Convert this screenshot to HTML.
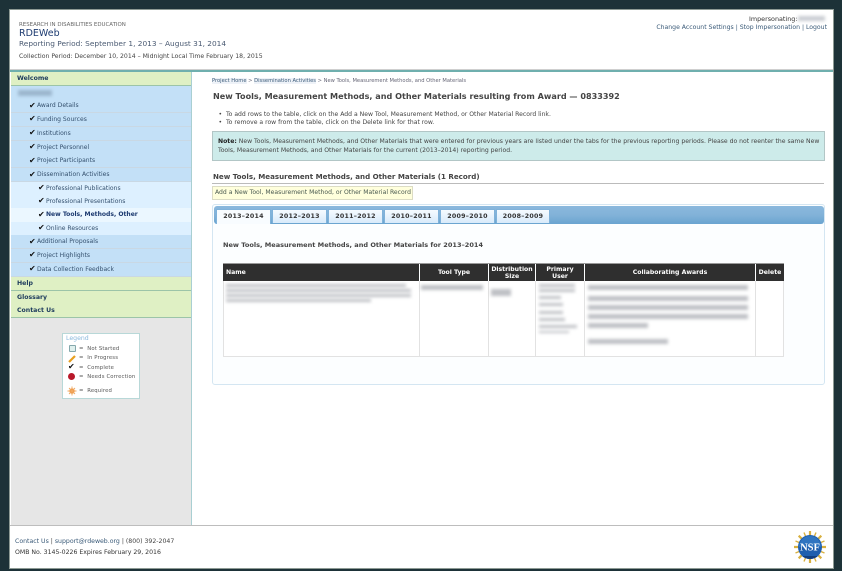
<!DOCTYPE html>
<html><head><meta charset="utf-8"><style>
html,body{margin:0;padding:0}
body{width:842px;height:571px;overflow:hidden;background:#1d3238;position:relative;font-family:"DejaVu Sans",sans-serif;font-size:6.15px;color:#333;filter:blur(.3px)}
.a{position:absolute;white-space:nowrap}
.t{position:absolute;white-space:nowrap;line-height:10px}
.m{position:absolute;left:11px;width:180px;box-sizing:border-box;border-bottom:1px solid #b8d4e0}
.g{background:#dff0c4;border-bottom:1px solid #9cc4a8;font-weight:bold;color:#1c3a5c;height:14px;line-height:13px;padding-left:6px;font-size:6.2px}
.b{background:#c3e0f7;height:14px;line-height:14px;color:#34506e;border-bottom:1px solid #c9d8e4;font-size:6.05px}
.s{background:#ddf0ff;height:13.4px;line-height:14px;color:#34506e;border-bottom:0;font-size:6.05px}
.c{position:absolute;color:#111;font-size:8px;line-height:10px}
.tab{position:absolute;top:209px;height:14px;background:linear-gradient(#f6fbff,#d8eafa);border:1px solid #7fb2da;border-bottom:0;box-sizing:border-box;text-align:center;font-weight:bold;font-size:6.3px;line-height:14px;color:#333;letter-spacing:.25px}
.th{position:absolute;top:264px;height:17px;background:#2f2f2f;color:#fff;font-weight:bold;text-align:center;font-size:6.15px;line-height:7px;display:flex;align-items:center;justify-content:center}
.bl{position:absolute;background:#a9acb2;filter:blur(1.5px);opacity:.75}
.v{position:absolute;top:281px;height:76px;width:1px;background:#e2e2e2}
.lg{font-size:5.3px;color:#555;letter-spacing:.15px}
</style></head><body>
<div class="a" style="left:9px;top:9px;width:825px;height:560px;background:#fff;border:1px solid #8d9a94;box-sizing:border-box"></div>
<div class="a" style="left:10px;top:69px;width:823px;height:1px;background:#cfcfcf"></div>
<div class="a" style="left:10px;top:70px;width:823px;height:2px;background:#6fafae"></div>
<div class="a" style="left:11px;top:72px;width:181px;height:453px;background:#e6e6e6;border-right:1px solid #a9cfd2;box-sizing:border-box"></div>
<div class="a" style="left:10px;top:525px;width:823px;height:1px;background:#bdbdbd"></div>

<div class="t" style="left:19px;top:20px;font-size:5.45px;color:#666">RESEARCH IN DISABILITIES EDUCATION</div>
<div class="t" style="left:19px;top:28px;font-size:9.5px;color:#1c3a70;line-height:12px">RDEWeb</div>
<div class="t" style="left:19px;top:38px;font-size:7.4px;color:#4a5a72;line-height:11px">Reporting Period: September 1, 2013 – August 31, 2014</div>
<div class="t" style="left:19px;top:51.5px;font-size:6.15px;color:#444">Collection Period: December 10, 2014 – Midnight Local Time February 18, 2015</div>
<div class="t" style="left:749px;top:14px;font-size:6.4px;color:#333">Impersonating:</div>
<div class="bl" style="left:798px;top:16px;width:27px;height:5px;background:#b8bcc4"></div>
<div class="t" style="right:15px;top:22.5px;font-size:6.15px;color:#3a5a78">Change Account Settings | Stop Impersonation | Logout</div>

<div class="m g" style="top:72px">Welcome</div>
<div class="m b" style="top:86px;height:13.6px"></div>
<div class="bl" style="left:18px;top:90px;width:34px;height:6px;background:#8fa8c0"></div>
<div class="m b" style="top:99px;padding-left:26px">Award Details</div><div class="c" style="left:29px;top:101px">✔</div>
<div class="m b" style="top:113px;padding-left:26px">Funding Sources</div><div class="c" style="left:29px;top:114px">✔</div>
<div class="m b" style="top:126.5px;padding-left:26px">Institutions</div><div class="c" style="left:29px;top:128px">✔</div>
<div class="m b" style="top:140.5px;padding-left:26px">Project Personnel</div><div class="c" style="left:29px;top:142px">✔</div>
<div class="m b" style="top:154px;padding-left:26px">Project Participants</div><div class="c" style="left:29px;top:156px">✔</div>
<div class="m b" style="top:168px;padding-left:26px">Dissemination Activities</div><div class="c" style="left:29px;top:170px">✔</div>
<div class="m s" style="top:181.5px;padding-left:35px">Professional Publications</div><div class="c" style="left:38px;top:183px">✔</div>
<div class="m s" style="top:194.9px;padding-left:35px">Professional Presentations</div><div class="c" style="left:38px;top:196px">✔</div>
<div class="m s" style="top:208.3px;padding-left:35px;background:#ebf7ff;font-weight:bold;color:#1c3a70">New Tools, Methods, Other</div><div class="c" style="left:38px;top:210px">✔</div>
<div class="m s" style="top:221.7px;padding-left:35px">Online Resources</div><div class="c" style="left:38px;top:223px">✔</div>
<div class="m b" style="top:235px;padding-left:26px">Additional Proposals</div><div class="c" style="left:29px;top:237px">✔</div>
<div class="m b" style="top:249px;padding-left:26px">Project Highlights</div><div class="c" style="left:29px;top:250px">✔</div>
<div class="m b" style="top:262.5px;padding-left:26px">Data Collection Feedback</div><div class="c" style="left:29px;top:264px">✔</div>
<div class="m g" style="top:276.5px">Help</div>
<div class="m g" style="top:290.5px">Glossary</div>
<div class="m g" style="top:304px">Contact Us</div>

<div class="a" style="left:62px;top:333px;width:78px;height:66px;background:#fff;border:1px solid #b8d8d8;box-sizing:border-box"></div>
<div class="t" style="left:66px;top:334px;color:#8ab8dc;font-size:6.2px">Legend</div>
<div class="a" style="left:69px;top:345px;width:5px;height:5px;background:#dff0ee;border:1px solid #84a8ac;border-radius:1px"></div>
<svg class="a" style="left:68px;top:354px" width="9" height="9" viewBox="0 0 9 9"><path d="M1 8 L7 2" stroke="#e8a020" stroke-width="2.2"/></svg>
<div class="c" style="left:68px;top:362px">✔</div>
<div class="a" style="left:68px;top:373px;width:7px;height:7px;border-radius:50%;background:#b8182a"></div>
<svg class="a" style="left:67px;top:386px" width="10" height="10" viewBox="0 0 10 10"><circle cx="5" cy="5" r="2.6" fill="#ee8a30"/><path d="M5 .5V9.5M.5 5H9.5M2 2L8 8M8 2L2 8" stroke="#f0a860" stroke-width=".9"/></svg>
<div class="t lg" style="left:79px;top:344px">=&nbsp; Not Started</div>
<div class="t lg" style="left:79px;top:353px">=&nbsp; In Progress</div>
<div class="t lg" style="left:79px;top:363px">=&nbsp; Complete</div>
<div class="t lg" style="left:79px;top:372px">=&nbsp; Needs Correction</div>
<div class="t lg" style="left:79px;top:386px">=&nbsp; Required</div>

<div class="t" style="left:212px;top:76px;font-size:5.17px;color:#667"><span style="color:#3a5a78;background:#eef2f8">Project Home</span> &gt; <span style="color:#3a5a78;background:#eef2f8">Dissemination Activities</span> &gt; New Tools, Measurement Methods, and Other Materials</div>
<div class="t" style="left:213px;top:91px;font-size:8.1px;font-weight:bold;color:#444;line-height:11px">New Tools, Measurement Methods, and Other Materials resulting from Award — 0833392</div>
<div class="t" style="left:218.5px;top:111px;font-size:6.1px;line-height:8px;color:#444">•&nbsp; To add rows to the table, click on the Add a New Tool, Measurement Method, or Other Material Record link.<br>•&nbsp; To remove a row from the table, click on the Delete link for that row.</div>
<div class="a" style="left:212px;top:131px;width:613px;height:30px;background:#cdebea;border:1px solid #b2c6c6;box-sizing:border-box"></div>
<div class="t" style="left:218px;top:136.5px;line-height:9.4px;color:#444;font-size:6.12px"><b style="color:#222">Note:</b> New Tools, Measurement Methods, and Other Materials that were entered for previous years are listed under the tabs for the previous reporting periods. Please do not reenter the same New<br>Tools, Measurement Methods, and Other Materials for the current (2013–2014) reporting period.</div>
<div class="t" style="left:213px;top:172px;font-size:7.1px;font-weight:bold;color:#444">New Tools, Measurement Methods, and Other Materials (1 Record)</div>
<div class="a" style="left:212px;top:183px;width:612px;height:1px;background:#bbb"></div>
<div class="a" style="left:212px;top:186px;width:201px;height:14px;background:#ffffdc;border:1px solid #dcdcc4;box-sizing:border-box"></div>
<div class="t" style="left:215px;top:188px;font-size:6.1px;color:#4a5a50">Add a New Tool, Measurement Method, or Other Material Record</div>

<div class="a" style="left:212px;top:204px;width:613px;height:181px;background:#fcfeff;border:1px solid #d4e6f2;border-radius:3px;box-sizing:border-box"></div>
<div class="a" style="left:214px;top:206px;width:610px;height:18px;background:linear-gradient(#8ab8dd,#82b2d8 50%,#6aa4d0);border-radius:3px"></div>
<div class="tab" style="left:216px;width:55px;height:15px;background:#f8fcff">2013–2014</div>
<div class="tab" style="left:272px;width:55px">2012–2013</div>
<div class="tab" style="left:328px;width:55px">2011–2012</div>
<div class="tab" style="left:384px;width:55px">2010–2011</div>
<div class="tab" style="left:440px;width:55px">2009–2010</div>
<div class="tab" style="left:496px;width:54px">2008–2009</div>
<div class="t" style="left:223px;top:240px;font-size:6.55px;font-weight:bold;color:#444">New Tools, Measurement Methods, and Other Materials for 2013–2014</div>

<div class="a" style="left:223px;top:263px;width:561px;height:1px;background:#999"></div>
<div class="a" style="left:223px;top:281px;width:561px;height:76px;background:#fff;box-sizing:border-box;border-bottom:1px solid #e2e2e2"></div>
<div class="th" style="left:223px;width:196px;justify-content:flex-start;padding-left:3px;box-sizing:border-box">Name</div>
<div class="th" style="left:420px;width:68px">Tool Type</div>
<div class="th" style="left:489px;width:46px">Distribution<br>Size</div>
<div class="th" style="left:536px;width:48px">Primary<br>User</div>
<div class="th" style="left:585px;width:170px">Collaborating Awards</div>
<div class="th" style="left:756px;width:28px">Delete</div>
<div class="v" style="left:223px"></div><div class="v" style="left:419px"></div><div class="v" style="left:488px"></div><div class="v" style="left:535px"></div><div class="v" style="left:584px"></div><div class="v" style="left:755px"></div><div class="v" style="left:783px"></div>

<div class="bl" style="left:226px;top:284px;width:180px;height:3px"></div>
<div class="bl" style="left:226px;top:289px;width:185px;height:3px"></div>
<div class="bl" style="left:226px;top:294px;width:185px;height:3px"></div>
<div class="bl" style="left:226px;top:299px;width:145px;height:3px"></div>
<div class="bl" style="left:421px;top:285px;width:62px;height:5px"></div>
<div class="bl" style="left:491px;top:289px;width:20px;height:7px"></div>
<div class="bl" style="left:539px;top:284px;width:36px;height:3px"></div>
<div class="bl" style="left:539px;top:289px;width:36px;height:3px"></div>
<div class="bl" style="left:539px;top:296px;width:22px;height:3px"></div>
<div class="bl" style="left:539px;top:303px;width:24px;height:3px"></div>
<div class="bl" style="left:539px;top:311px;width:24px;height:3px"></div>
<div class="bl" style="left:539px;top:318px;width:26px;height:3px"></div>
<div class="bl" style="left:539px;top:325px;width:38px;height:3px"></div>
<div class="bl" style="left:539px;top:331px;width:30px;height:2px"></div>
<div class="bl" style="left:588px;top:285px;width:160px;height:5px"></div>
<div class="bl" style="left:588px;top:296px;width:160px;height:5px"></div>
<div class="bl" style="left:588px;top:305px;width:160px;height:5px"></div>
<div class="bl" style="left:588px;top:314px;width:160px;height:5px"></div>
<div class="bl" style="left:588px;top:323px;width:60px;height:5px"></div>
<div class="bl" style="left:588px;top:339px;width:80px;height:5px"></div>

<div class="t" style="left:15px;top:537px;font-size:6.2px;color:#444"><span style="color:#3a5a78">Contact Us</span> | <span style="color:#3a5a78">support@rdeweb.org</span> | (800) 392-2047</div>
<div class="t" style="left:15px;top:548px;font-size:6.2px;color:#333">OMB No. 3145-0226 Expires February 29, 2016</div>

<svg class="a" style="left:793px;top:530px" width="34" height="34" viewBox="0 0 34 34">
<g stroke="#d8b040" stroke-width="2.2"><path d="M17 1V33M1 17H33M5.7 5.7L28.3 28.3M28.3 5.7L5.7 28.3"/><path d="M11 2.5L23 31.5M23 2.5L11 31.5M2.5 11L31.5 23M2.5 23L31.5 11" stroke-width="1.4"/></g>
<circle cx="17" cy="17" r="12" fill="#1f5fae"/>
<path d="M6 17a11 11 0 0 1 22 0z" fill="#2f74c0"/>
<path d="M9 26a12 12 0 0 0 16 0z" fill="#123f80"/>
<text x="17" y="20.5" text-anchor="middle" font-family="Liberation Serif,serif" font-size="10.5" font-weight="bold" fill="#fff">NSF</text>
</svg>
</body></html>
